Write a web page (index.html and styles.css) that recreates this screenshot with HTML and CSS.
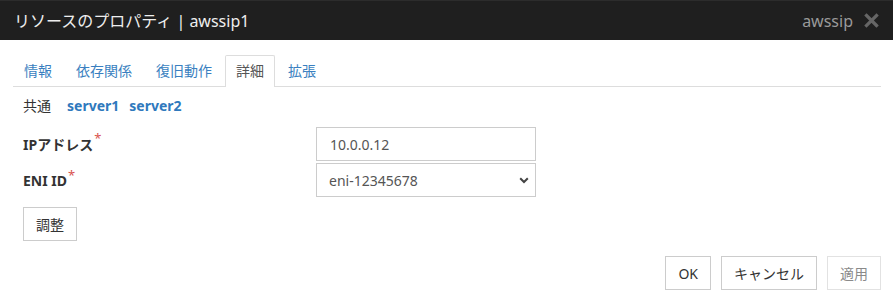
FILE: index.html
```html
<!DOCTYPE html>
<html lang="ja">
<head>
    <meta charset="UTF-8">
    <meta name="viewport" content="width=device-width, initial-scale=1.0">
    <title>リソースのプロパティ</title>
    <link rel="stylesheet" href="styles.css">
</head>
<body>
    <div class="dialog">
        <!-- Title bar -->
        <div class="dialog-header">
            <span class="dialog-title">リソースのプロパティ | awssip1</span>
            <span class="header-right">
                <span class="res-type">awssip</span>
                <span class="close-btn">
                    <svg width="15" height="15" viewBox="0 0 15 15">
                        <path d="M2.5 2.5 L12.5 12.5 M12.5 2.5 L2.5 12.5" stroke="#666" stroke-width="3.2" stroke-linecap="square"/>
                    </svg>
                </span>
            </span>
        </div>

        <div class="dialog-body">
            <!-- Tabs -->
            <ul class="nav-tabs">
                <li><a href="#">情報</a></li>
                <li><a href="#">依存関係</a></li>
                <li><a href="#">復旧動作</a></li>
                <li class="active"><a href="#">詳細</a></li>
                <li><a href="#">拡張</a></li>
            </ul>

            <div class="tab-content">
                <div class="server-tabs">
                    <span class="server-current">共通</span>
                    <a href="#" class="server-link">server1</a>
                    <a href="#" class="server-link">server2</a>
                </div>

                <div class="form-row">
                    <label class="form-label">IPアドレス<sup class="req">*</sup></label>
                    <input type="text" class="form-control" value="10.0.0.12">
                </div>
                <div class="form-row">
                    <label class="form-label">ENI ID<sup class="req">*</sup></label>
                    <div class="select-wrap">
                        <select class="form-control">
                            <option>eni-12345678</option>
                        </select>
                        <svg class="select-arrow" width="10" height="7" viewBox="0 0 10 7">
                            <path d="M1.2 1.2 L5 5 L8.8 1.2" fill="none" stroke="#444" stroke-width="2"/>
                        </svg>
                    </div>
                </div>

                <button class="btn">調整</button>
            </div>

            <!-- Footer buttons -->
            <div class="dialog-footer">
                <button class="btn">OK</button>
                <button class="btn">キャンセル</button>
                <button class="btn" disabled>適用</button>
            </div>
        </div>
    </div>
</body>
</html>
```

FILE: styles.css
```css
body {
    margin: 0;
    font-family: "Noto Sans", "Noto Sans CJK JP", sans-serif;
    font-size: 14px;
    color: #333;
    background: #fff;
}
.dialog {
    width: 893px;
    height: 299px;
    overflow: hidden;
}
.dialog-header {
    height: 40px;
    box-sizing: border-box;
    border-top: 1px solid #2c2c2c;
    background-color: #1f1f1f;
    display: flex;
    align-items: center;
    justify-content: space-between;
    padding: 0 14px 0 14px;
}
.dialog-title {
    color: #eeeeee;
    font-size: 16px;
    line-height: 20px;
}
.header-right {
    display: flex;
    align-items: center;
    gap: 11px;
}
.res-type {
    color: #9a9a9a;
    font-size: 16px;
    line-height: 20px;
}
.close-btn {
    display: flex;
    align-items: center;
}
.dialog-body {
    padding: 15px 12px 0 13px;
}
.nav-tabs {
    list-style: none;
    margin: 0;
    padding: 0;
    display: flex;
    border-bottom: 1px solid #dddddd;
}
.nav-tabs li {
    margin-right: 2px;
    margin-bottom: -1px;
}
.nav-tabs a {
    display: block;
    padding: 0 10px;
    height: 30px;
    line-height: 30px;
    color: #3a7fc0;
    text-decoration: none;
    border: 1px solid transparent;
    border-bottom: none;
}
.nav-tabs li.active a {
    color: #555;
    background: #fff;
    border-color: #dddddd;
    height: 31px;
    border-radius: 2px 2px 0 0;
}
.tab-content {
    padding: 0 0 0 10px;
}
.server-tabs {
    display: flex;
    align-items: center;
    height: 20px;
    margin-top: 8px;
}
.server-current {
    color: #333;
    margin-right: 16px;
}
.server-link {
    color: #2f79bd;
    font-weight: bold;
    text-decoration: none;
    margin-right: 10px;
}
.form-row {
    display: flex;
    align-items: center;
    margin-top: 2px;
}
.server-tabs + .form-row {
    margin-top: 12px;
}
.form-label {
    width: 293px;
    font-weight: bold;
    color: #333;
}
.req {
    color: #d9534f;
    font-weight: normal;
    font-size: 13px;
    line-height: 1;
    vertical-align: top;
    position: relative;
    top: -2px;
    margin-left: 1px;
}
.form-control {
    width: 220px;
    height: 34px;
    box-sizing: border-box;
    padding: 0 13px;
    border: 1px solid #cccccc;
    border-radius: 0;
    font-family: inherit;
    font-size: 14px;
    color: #555;
    background: #fff;
    outline: none;
}
.select-wrap {
    position: relative;
    width: 220px;
}
.select-wrap select {
    appearance: none;
    -webkit-appearance: none;
    padding-left: 12px;
}
.select-arrow {
    position: absolute;
    right: 7px;
    top: 14px;
    pointer-events: none;
}
.btn {
    height: 34px;
    box-sizing: border-box;
    padding: 0 12px;
    border: 1px solid #cccccc;
    border-radius: 0;
    background: #fff;
    font-family: inherit;
    font-size: 14px;
    color: #333;
    cursor: pointer;
}
.tab-content .btn {
    margin-top: 10px;
}
.btn:disabled {
    color: #8a8a8a;
    border-color: #e2e2e2;
    cursor: default;
}
.dialog-footer {
    display: flex;
    justify-content: flex-end;
    gap: 10px;
    margin-top: 15px;
}
```
